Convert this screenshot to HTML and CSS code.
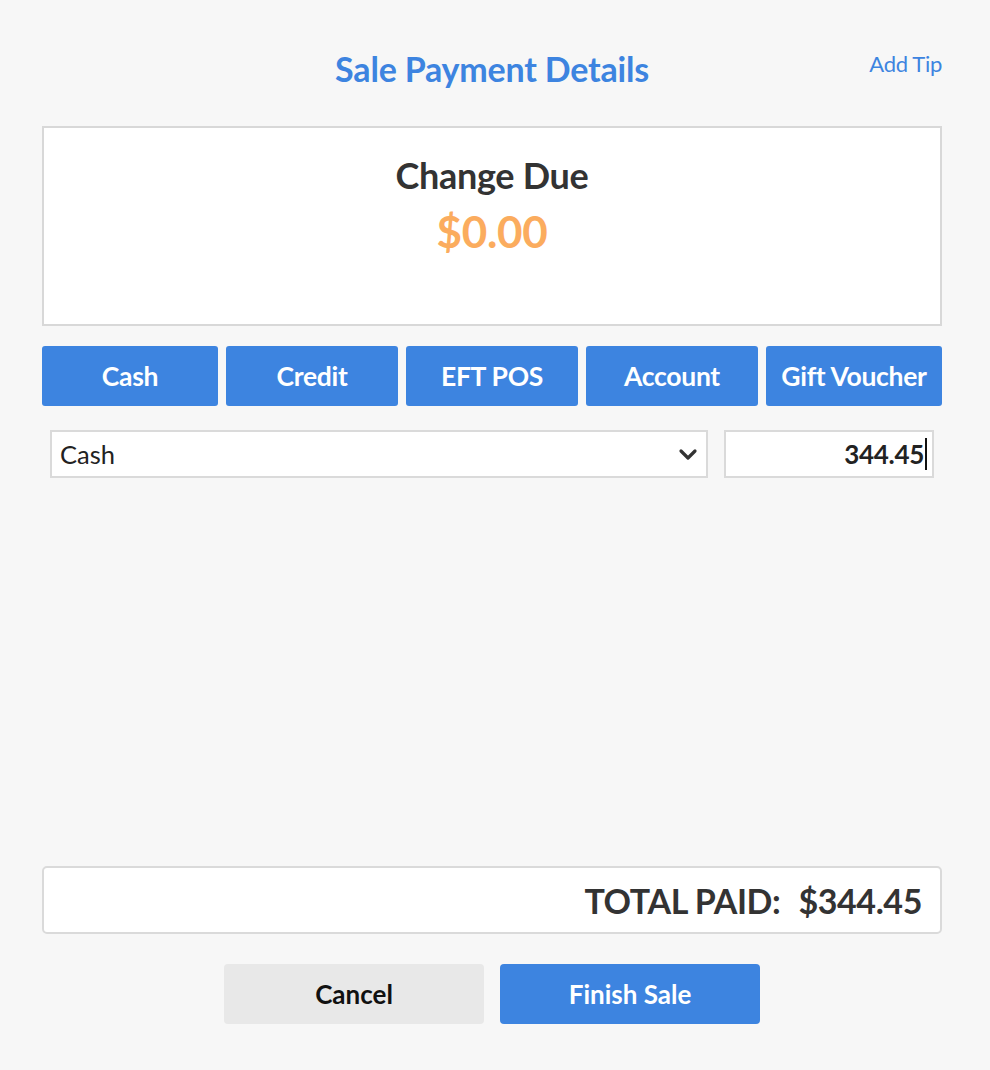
FILE: index.html
```html
<!DOCTYPE html>
<html>
<head>
<meta charset="utf-8">
<link rel="stylesheet" href="styles.css">
</head>
<body>
<div class="modal">
  <div class="header">
    <h1 class="title">Sale Payment Details</h1>
    <a class="add-tip">Add Tip</a>
  </div>
  <div class="change-box">
    <div class="change-label">Change Due</div>
    <div class="change-amount">$0.00</div>
  </div>
  <div class="methods">
    <button class="method">Cash</button>
    <button class="method">Credit</button>
    <button class="method">EFT POS</button>
    <button class="method">Account</button>
    <button class="method">Gift Voucher</button>
  </div>
  <div class="pay-row">
    <div class="select">
      <span>Cash</span>
      <svg class="chev" width="20" height="14" viewBox="0 0 20 14"><path d="M3 4 L10 11 L17 4" fill="none" stroke="#333" stroke-width="3.2" stroke-linecap="round" stroke-linejoin="round"/></svg>
    </div>
    <div class="amount-input"><span>344.45</span><span class="caret"></span></div>
  </div>
  <div class="spacer"></div>
  <div class="total-box">
    <span>TOTAL PAID:</span><span class="total-val">$344.45</span>
  </div>
  <div class="actions">
    <button class="btn cancel">Cancel</button>
    <button class="btn finish">Finish Sale</button>
  </div>
</div>
</body>
</html>
```

FILE: styles.css
```css
html, body {
  margin: 0;
  padding: 0;
  background: #f7f7f7;
}
body {
  font-family: Lato, "Open Sans", sans-serif;
  color: #333;
}
.modal {
  width: 900px;
  margin: 0 auto;
  padding: 0 48px 0 42px;
  display: flex;
  flex-direction: column;
}
.header {
  position: relative;
  height: 126px;
}
.title {
  margin: 0;
  position: absolute;
  left: 0;
  right: 0;
  top: 47px;
  text-align: center;
  font-size: 34px;
  font-weight: 700;
  color: #3d84e0;
  line-height: 44px;
  letter-spacing: -0.2px;
}
.add-tip {
  position: absolute;
  right: 0;
  top: 50px;
  font-size: 22px;
  color: #3d84e0;
  line-height: 28px;
  letter-spacing: -0.3px;
}
.change-box {
  box-sizing: border-box;
  height: 200px;
  background: #fff;
  border: 2px solid #d8d8d8;
  display: flex;
  flex-direction: column;
  align-items: center;
  padding-top: 24px;
}
.change-label {
  font-size: 36px;
  font-weight: 700;
  color: #333;
  line-height: 46px;
  letter-spacing: -0.3px;
}
.change-amount {
  font-size: 44px;
  font-weight: 700;
  color: #fbac5e;
  line-height: 54px;
  margin-top: 6px;
  letter-spacing: -0.3px;
}
.methods {
  display: grid;
  grid-template-columns: 176px 172px 172px 172px 176px;
  gap: 8px;
  margin-top: 20px;
}
.method {
  height: 60px;
  border: none;
  border-radius: 3px;
  background: #3d84e0;
  color: #fff;
  font-family: Lato, sans-serif;
  font-size: 26.5px;
  font-weight: 700;
  padding: 0;
  white-space: nowrap;
  letter-spacing: -0.3px;
}
.pay-row {
  display: flex;
  margin-top: 24px;
  padding-left: 8px;
  gap: 16px;
}
.select {
  box-sizing: border-box;
  width: 658px;
  height: 48px;
  background: #fff;
  border: 2px solid #dadada;
  display: flex;
  align-items: center;
  justify-content: space-between;
  padding: 0 8px 0 8px;
  font-size: 25.5px;
  color: #222;
}
.chev {
  display: block;
}
.amount-input {
  box-sizing: border-box;
  width: 210px;
  height: 48px;
  background: #fff;
  border: 2px solid #dadada;
  display: flex;
  align-items: center;
  justify-content: flex-end;
  padding-right: 5px;
  font-size: 26px;
  font-weight: 700;
  color: #222;
  letter-spacing: -0.3px;
}
.caret {
  display: inline-block;
  width: 2px;
  height: 32px;
  background: #111;
  margin-left: 1px;
}
.spacer {
  height: 388px;
}
.total-box {
  box-sizing: border-box;
  height: 68px;
  background: #fff;
  border: 2px solid #dadada;
  border-radius: 5px;
  display: flex;
  align-items: center;
  justify-content: flex-end;
  padding-right: 18px;
  font-size: 34px;
  font-weight: 700;
  color: #333;
  letter-spacing: -0.4px;
}
.total-val {
  margin-left: 18px;
}
.actions {
  display: flex;
  justify-content: center;
  gap: 16px;
  margin-top: 30px;
}
.btn {
  width: 260px;
  height: 60px;
  border: none;
  border-radius: 4px;
  font-family: Lato, sans-serif;
  font-size: 26px;
  font-weight: 700;
  padding: 0;
}
.cancel {
  background: #e8e8e8;
  color: #111;
}
.finish {
  background: #3d84e0;
  color: #fff;
}
```
